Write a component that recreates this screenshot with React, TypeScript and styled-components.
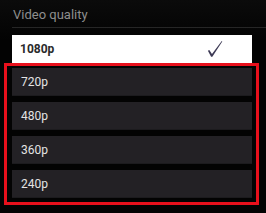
import styled, { createGlobalStyle } from 'styled-components'

const GlobalStyle = createGlobalStyle`
  html, body {
    margin: 0;
    padding: 0;
    background: #030303;
  }
  body {
    font-family: Roboto, "Liberation Sans", Arial, sans-serif;
  }
`

const Panel = styled.div`
  width: 266px;
  height: 213px;
  box-sizing: border-box;
  padding: 0 14px 0 12px;
  background: linear-gradient(#0b0b0b, #030303 40px);
  overflow: hidden;
`

const Title = styled.div`
  height: 28px;
  box-sizing: border-box;
  margin-right: -14px;
  padding: 2px 0 0 1px;
  display: flex;
  align-items: center;
  font-size: 13px;
  color: #8e8e8e;
  border-bottom: 1px solid #262626;
`

const Selected = styled.div`
  margin-top: 7px;
  height: 28px;
  display: flex;
  align-items: center;
  justify-content: space-between;
  padding: 0 29px 0 8px;
  background: #ffffff;
  color: #2a2a2a;
  font-size: 12px;
  font-weight: 700;
`

const Highlight = styled.div`
  margin: 0 -7px 0 -8px;
  border: 3px solid #e8101c;
  padding: 2px 4px 4px 5px;
  display: flex;
  flex-direction: column;
  gap: 6px;
`

const Option = styled.div`
  height: 28px;
  display: flex;
  align-items: center;
  padding: 0 9px;
  background: #232125;
  border-bottom: 1px solid #1c1b1e;
  box-sizing: border-box;
  color: #e4e4e4;
  font-size: 12px;
`

function Check() {
  return (
    <svg width="16" height="18" viewBox="0 0 18 19">
      <path
        d="M1 11.5 L2.6 10.6 L5.6 15.2 L16.6 0.6 L17.2 1.2 L6 18.2 L4.6 18.2 Z"
        fill="#3d3a55"
      />
    </svg>
  )
}

export default function App() {
  const options = ['720p', '480p', '360p', '240p']
  return (
    <>
      <GlobalStyle />
      <Panel>
        <Title>Video quality</Title>
        <Selected>
          1080p
          <Check />
        </Selected>
        <Highlight>
          {options.map((o) => (
            <Option key={o}>{o}</Option>
          ))}
        </Highlight>
      </Panel>
    </>
  )
}
